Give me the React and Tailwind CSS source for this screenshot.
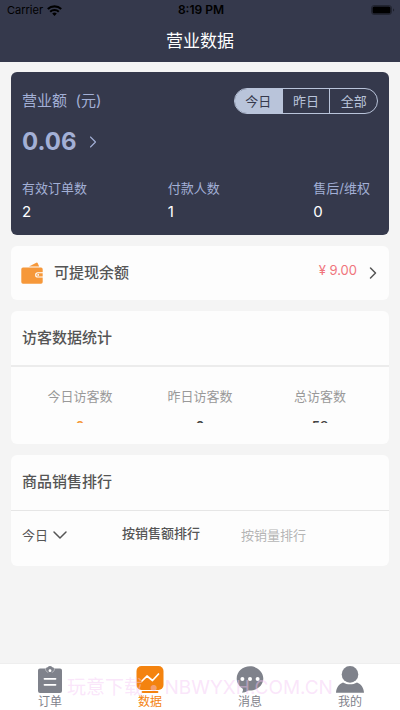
import { useState } from 'react'
import { ChevronDown, ChevronRight } from 'lucide-react'

const periods = ['今日', '昨日', '全部']

const orderStats = [
  { label: '有效订单数', value: '2' },
  { label: '付款人数', value: '1' },
  { label: '售后/维权', value: '0' },
]

const visitorStats = [
  { label: '今日访客数', value: '0', color: 'text-[#f6983a]' },
  { label: '昨日访客数', value: '0', color: 'text-[#444]' },
  { label: '总访客数', value: '58', color: 'text-[#444]' },
]

function OrderIcon() {
  return (
    <svg viewBox="0 0 28 28" className="w-7 h-7" aria-hidden="true">
      <path fill="currentColor" d="M4 2.500h6a1.600 1.600 0 0 1 1.700-1.200 2.800 2.800 0 0 1 4.600 0A1.600 1.600 0 0 1 18 2.500h6a2 2 0 0 1 2 2V25a2 2 0 0 1-2 2H4a2 2 0 0 1-2-2V4.500a2 2 0 0 1 2-2z" />
      <path fill="none" stroke="#fff" strokeOpacity="0.500" strokeWidth="0.800" d="M9.500 3c.3 2.200 1.300 3 2.700 3.300M18.500 3c-.3 2.200-1.300 3-2.700 3.300" />
      <circle cx="14" cy="4.700" r="1.400" fill="#fff" />
      <path stroke="#fff" strokeWidth="1.800" strokeLinecap="round" d="M8.500 12.800h11M8.500 18.800h11" />
    </svg>
  )
}

function DataIcon() {
  return (
    <svg viewBox="0 0 28 28" className="w-7 h-7" aria-hidden="true">
      <rect x="0.500" y="0" width="27" height="24" rx="5" fill="currentColor" />
      <path d="M6.500 26h15" stroke="currentColor" strokeWidth="1.800" strokeLinecap="round" />
      <path d="M6 15l5-5 5.500 4.500 6-6.500" fill="none" stroke="#fff" strokeWidth="1.700" strokeLinecap="round" strokeLinejoin="round" />
    </svg>
  )
}

function MessageIcon() {
  return (
    <svg viewBox="0 0 28 28" className="w-7 h-7" aria-hidden="true">
      <path fill="currentColor" d="M14 .3C6.700.3.700 5.600.700 12.600c0 4.300 2.300 7.900 6 10.100.6 1.500.2 2.600-.8 3.900 2.700-.1 4.800-.8 6.500-2.100l1.600.1c7.300 0 13.300-5.300 13.300-12S21.300.3 14 .3z" />
      <g fill="#fff">
        <circle cx="6.400" cy="13" r="2" />
        <circle cx="14" cy="13" r="2" />
        <circle cx="21.600" cy="13" r="2" />
      </g>
    </svg>
  )
}

function ProfileIcon() {
  return (
    <svg viewBox="0 0 28 28" className="w-7 h-7" aria-hidden="true">
      <circle cx="14" cy="8.400" r="8.300" fill="currentColor" />
      <path fill="currentColor" d="M7 16.400c4.300 2.600 9.700 2.600 14 0 4 1.600 6.800 5 7 10.300H0c.2-5.300 3-8.700 7-10.300z" />
    </svg>
  )
}

function WalletIcon() {
  return (
    <svg viewBox="0 0 22 22" className="w-[22px] h-[22px]" aria-hidden="true">
      <path fill="#f6983a" d="M8 4.500L15.300.8a1 1 0 0 1 1.400.5L18.200 4.500z" />
      <path fill="#f6983a" d="M2 5.500h18A1.700 1.700 0 0 1 21.700 7.200V20a1.700 1.700 0 0 1-1.700 1.700H2A1.700 1.700 0 0 1 .3 20V7.200A1.700 1.700 0 0 1 2 5.500z" />
      <path fill="#fff" d="M22 10.200h-5.200a2.700 2.700 0 0 0 0 5.400H22z" />
      <path fill="#f6983a" d="M21.700 11.300h-4.800a1.600 1.600 0 0 0 0 3.200h4.800z" />
      <circle cx="17.200" cy="12.900" r="0.900" fill="#fff" />
    </svg>
  )
}

const tabs = [
  { label: '订单', href: '#orders', icon: OrderIcon },
  { label: '数据', href: '#data', icon: DataIcon, active: true },
  { label: '消息', href: '#messages', icon: MessageIcon },
  { label: '我的', href: '#profile', icon: ProfileIcon },
]

function StatusBar() {
  return (
    <div className="grid grid-cols-3 items-center h-5 pl-[7px] pr-[5px] text-[11px] text-black">
      <div className="flex items-center gap-1">
        <span>Carrier</span>
        <svg viewBox="0 0 15 11" className="w-[15px] h-[11px]" aria-hidden="true">
          <g fill="none" stroke="currentColor" strokeWidth="2.100">
            <path d="M.8 4.100a9.600 9.600 0 0 1 13.400 0" />
            <path d="M3.200 6.700a6.200 6.200 0 0 1 8.600 0" />
          </g>
          <path fill="currentColor" d="M5.200 8.500a3.400 3.400 0 0 1 4.600 0L7.500 10.900z" />
        </svg>
      </div>
      <span className="text-center text-xs font-semibold">8:19 PM</span>
      <svg viewBox="0 0 24 10" className="w-6 h-[10px] justify-self-end" aria-hidden="true">
        <rect x="0.500" y="0.500" width="20" height="9" rx="2.500" fill="none" stroke="#000" strokeOpacity="0.350" />
        <rect x="1.500" y="1.500" width="18" height="7" rx="1.500" fill="#000" />
        <path d="M22 3.500v3c.8-.3 1.200-.8 1.200-1.500S22.800 3.800 22 3.500z" fill="#000" fillOpacity="0.400" />
      </svg>
    </div>
  )
}

export default function App() {
  const [period, setPeriod] = useState('今日')
  const [rankPeriod, setRankPeriod] = useState('今日')

  return (
    <div className="min-h-screen flex flex-col bg-[#f4f4f4] font-[Inter,'Noto_Sans_CJK_SC',sans-serif] text-[#555]">
      <header className="bg-[#35394c]">
        <StatusBar />
        <h1 className="h-[42px] leading-[42px] text-center text-[17px] text-white">营业数据</h1>
      </header>

      <main className="flex-1 flex flex-col gap-[11px] px-[11px] pt-[10px] pb-4">
        {/* Revenue */}
        <section className="rounded-md bg-[#35394c] px-[11px] pt-[15px] pb-[13px] text-[#a3b0d6]">
          <div className="flex items-center justify-between">
            <h2 className="text-[15px] leading-7">营业额&nbsp; (元)</h2>
            <div className="flex h-[26px] w-36 rounded-full border border-[#b9c4da] overflow-hidden text-[13px]">
              {periods.map((item) => (
                <button
                  key={item}
                  type="button"
                  aria-pressed={period === item}
                  onClick={() => setPeriod(item)}
                  className={`flex-1 border-[#b9c4da] not-first:border-l leading-6 ${
                    period === item ? 'bg-[#b9c4da] text-[#35394c]' : 'text-[#b9c4da]'
                  }`}
                >
                  {item}
                </button>
              ))}
            </div>
          </div>

          <a href="#revenue" className="mt-[11px] flex items-center gap-[6px]">
            <span className="text-2xl leading-8 font-bold">0.06</span>
            <ChevronRight size={20} strokeWidth={1.3} />
          </a>

          <dl className="mt-5 grid grid-cols-[9fr_9fr_4fr]">
            {orderStats.map((stat) => (
              <div key={stat.label} className="whitespace-nowrap">
                <dt className="text-[13px] leading-5">{stat.label}</dt>
                <dd className="mt-1 text-[15px] leading-5 text-white">{stat.value}</dd>
              </div>
            ))}
          </dl>
        </section>

        {/* Balance */}
        <a href="#balance" className="flex items-center h-[54px] rounded-md bg-[#fdfdfd] pl-[10px] pr-[6px]">
          <WalletIcon />
          <span className="ml-[11px] text-[15px] font-medium">可提现余额</span>
          <span className="ml-auto pb-1 text-[13px] text-[#f0747c]">¥ 9.00</span>
          <ChevronRight size={20} strokeWidth={1.8} className="ml-[6px]" />
        </a>

        {/* Visitors */}
        <section className="rounded-md bg-[#fdfdfd] pb-[21px]">
          <h2 className="h-[56px] border-b-2 border-[#ececec] px-[11px] leading-[54px] text-[15px] font-medium">访客数据统计</h2>
          <dl className="grid grid-cols-3 h-[56px] px-[9px] pt-[19px] overflow-hidden text-center">
            {visitorStats.map((stat) => (
              <div key={stat.label}>
                <dt className="text-[13px] leading-5 text-[#999]">{stat.label}</dt>
                <dd className={`mt-[10px] text-[13px] leading-5 font-semibold ${stat.color}`}>{stat.value}</dd>
              </div>
            ))}
          </dl>
        </section>

        {/* Sales ranking */}
        <section className="rounded-md bg-[#fdfdfd]">
          <h2 className="h-[56px] border-b border-[#e6e6e6] px-[11px] leading-[54px] text-[15px] font-medium">商品销售排行</h2>
          <div className="flex h-[55px] items-start px-[11px] pt-3 text-[13px] leading-5">
            <label className="relative mt-[2px] w-[100px]">
              <select
                aria-label="排行时间"
                value={rankPeriod}
                onChange={(e) => setRankPeriod(e.target.value)}
                className="block w-12 h-5 appearance-none bg-transparent"
              >
                {periods.map((item) => (
                  <option key={item}>{item}</option>
                ))}
              </select>
              <ChevronDown size={24} strokeWidth={1.5} className="absolute left-[26px] -top-[2px] pointer-events-none" />
            </label>
            <button type="button" className="w-[119px] text-left font-medium leading-5">按销售额排行</button>
            <button type="button" className="mt-[2px] text-left leading-5 text-[#b5b5b5]">按销量排行</button>
          </div>
        </section>
      </main>

      <nav className="sticky bottom-0 grid grid-cols-4 h-[47px] bg-white border-t border-[#eee] text-xs text-[#7f828b]">
        {tabs.map(({ label, href, icon: Icon, active }) => (
          <a
            key={label}
            href={href}
            aria-current={active ? 'page' : undefined}
            className={`flex flex-col items-center pt-[2px] ${active ? 'text-[#f4830f]' : ''}`}
          >
            <Icon />
            <span className="leading-4">{label}</span>
          </a>
        ))}
        <p className="absolute inset-x-0 top-3 text-center text-[19px] leading-6 whitespace-nowrap text-[#f5c6f5]/45 pointer-events-none">
          玩意下载 • NBWYXH.COM.CN
        </p>
      </nav>
    </div>
  )
}
